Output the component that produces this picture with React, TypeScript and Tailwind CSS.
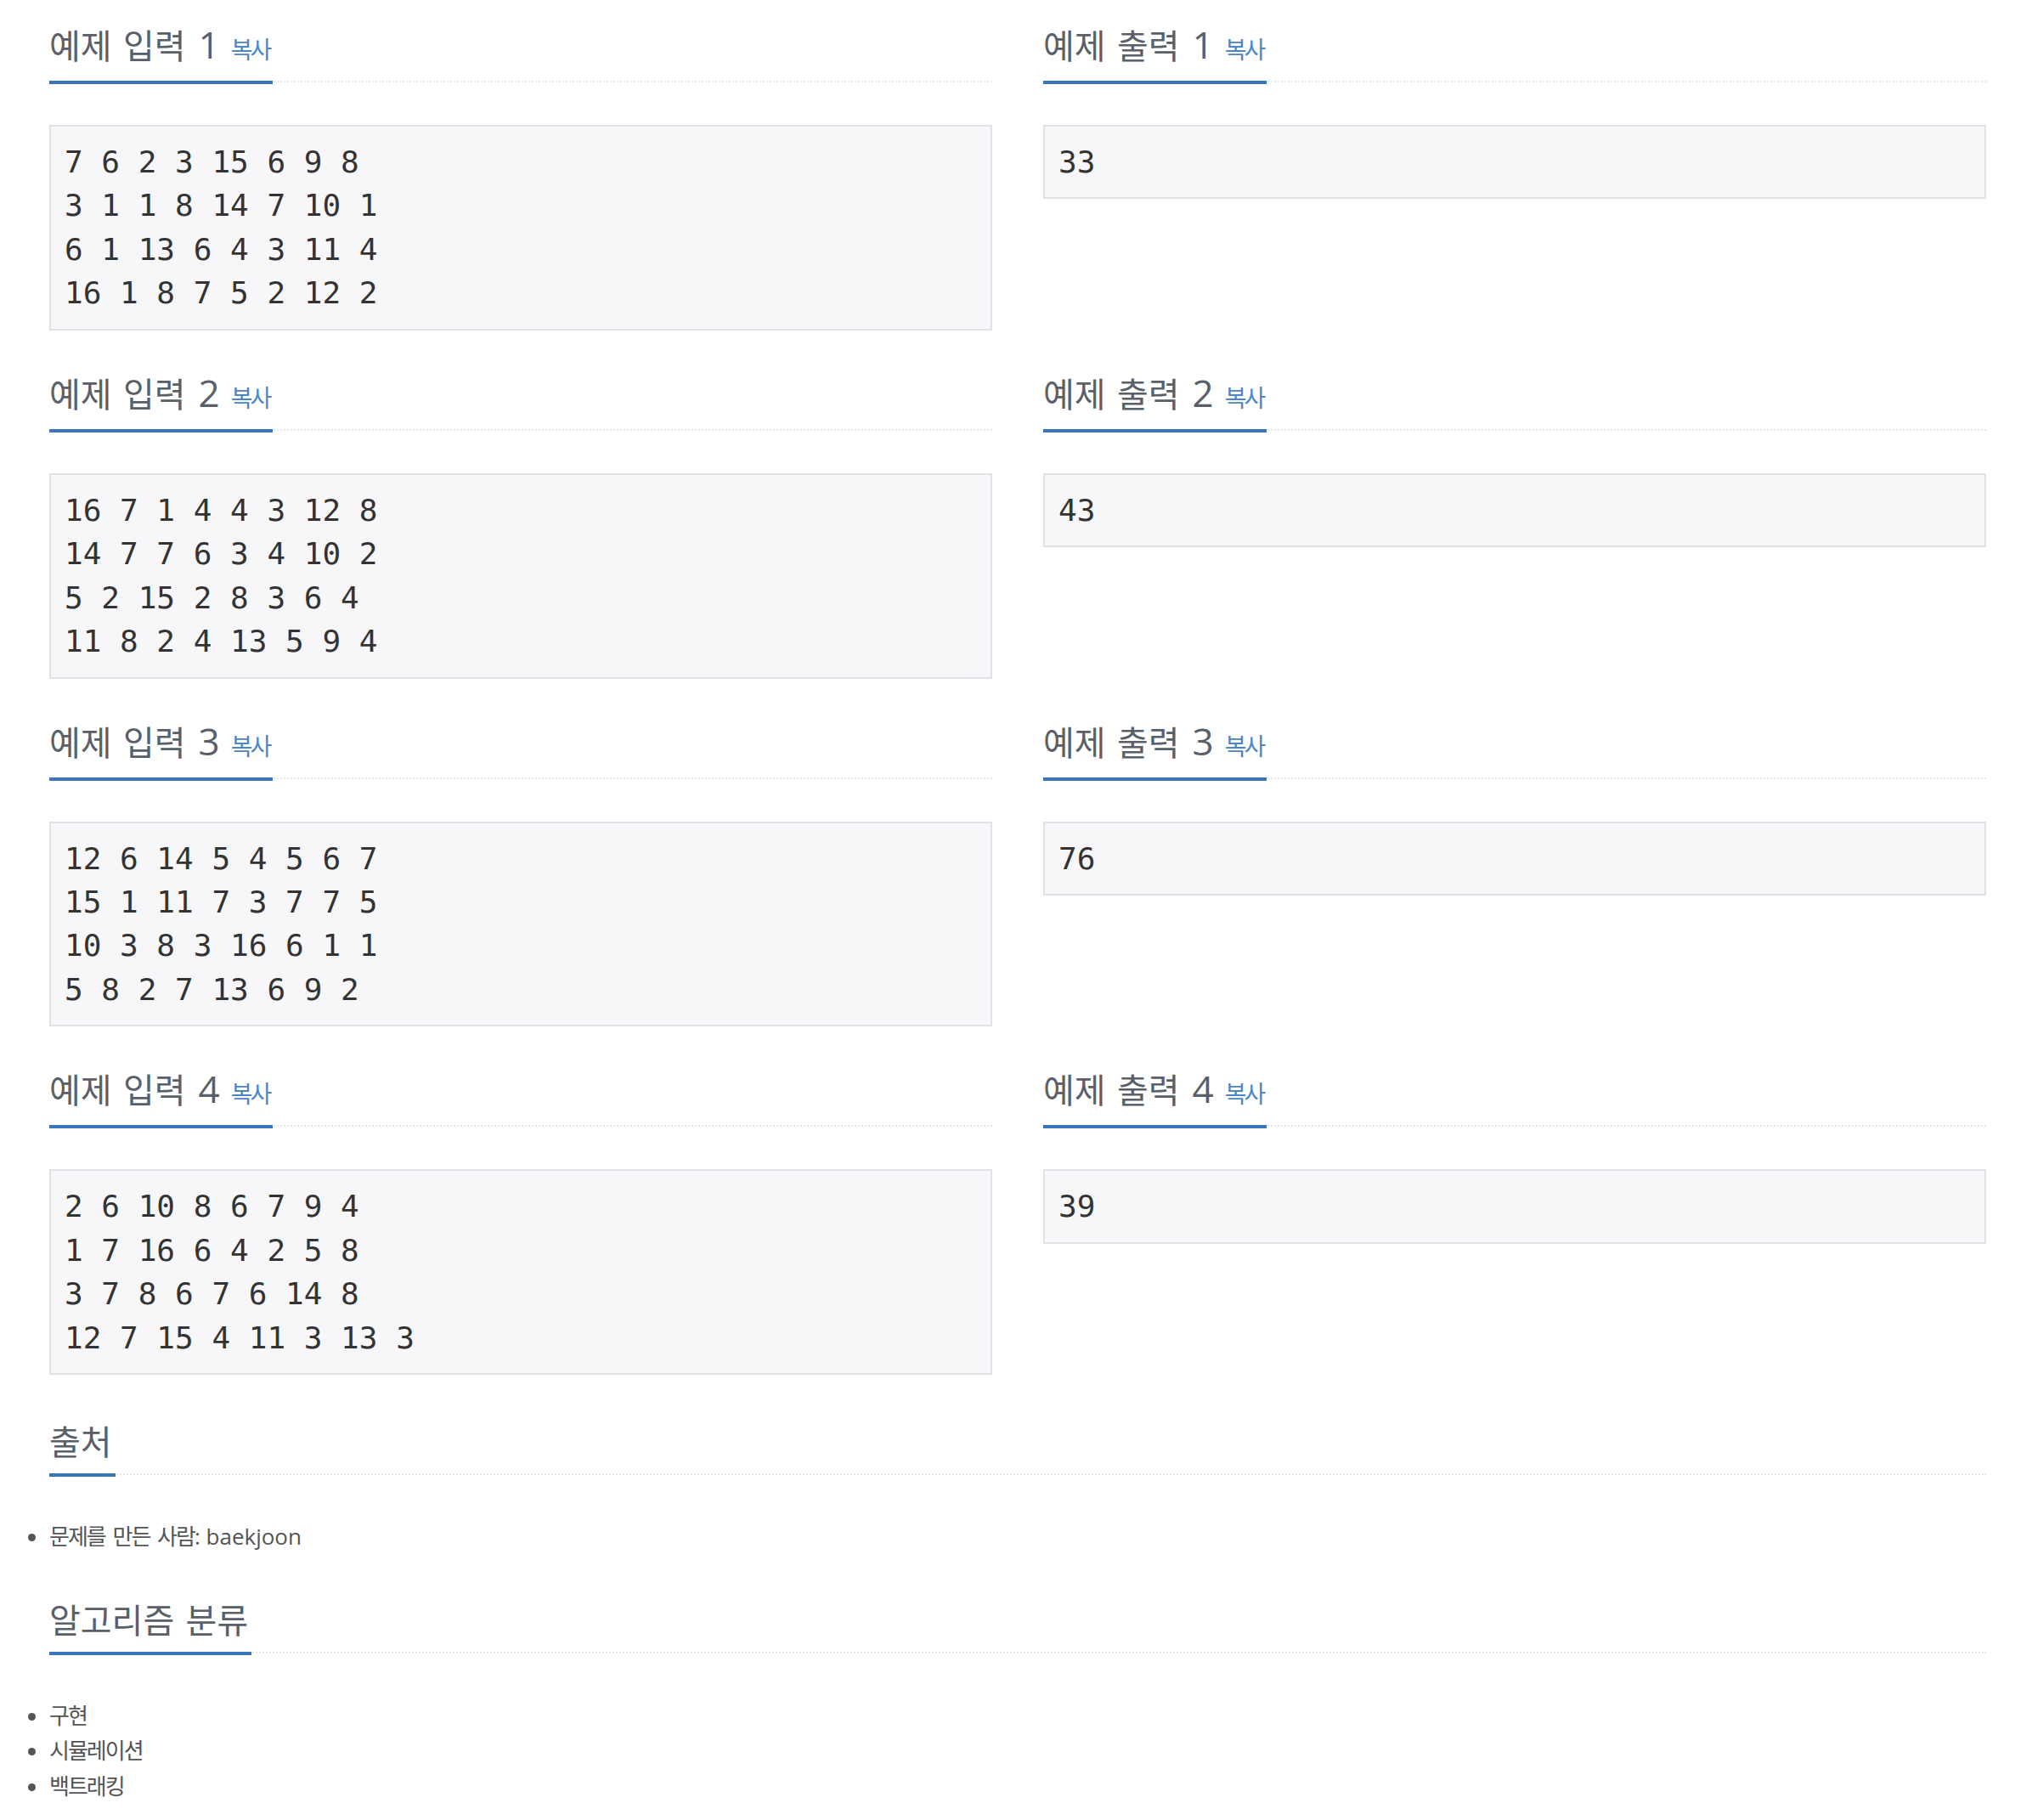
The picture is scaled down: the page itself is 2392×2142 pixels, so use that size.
const SAMPLES = [
  {
    input: "7 6 2 3 15 6 9 8\n3 1 1 8 14 7 10 1\n6 1 13 6 4 3 11 4\n16 1 8 7 5 2 12 2",
    output: "33",
  },
  {
    input: "16 7 1 4 4 3 12 8\n14 7 7 6 3 4 10 2\n5 2 15 2 8 3 6 4\n11 8 2 4 13 5 9 4",
    output: "43",
  },
  {
    input: "12 6 14 5 4 5 6 7\n15 1 11 7 3 7 7 5\n10 3 8 3 16 6 1 1\n5 8 2 7 13 6 9 2",
    output: "76",
  },
  {
    input: "2 6 10 8 6 7 9 4\n1 7 16 6 4 2 5 8\n3 7 8 6 7 6 14 8\n12 7 15 4 11 3 13 3",
    output: "39",
  },
];

const ALGORITHMS = ["구현", "시뮬레이션", "백트래킹"];

function Headline({ title, num, copy }: { title: string; num?: number; copy?: boolean }) {
  return (
    <div className="flex border-b-2 border-dotted border-[#e4e9f0] pt-[28px]">
      <h2 className="-mb-1 border-b-4 border-[#3a75bb] pb-[13px] pr-1 text-[40px] leading-[48px] font-normal text-[#5a6069]">
        <span className="[word-spacing:3px]">{title}</span>
        {num !== undefined && <span className="ml-[15px] text-[44px]">{num}</span>}
        {copy && (
          <span className="ml-[13px] text-[28px] tracking-[-3px] text-[#4a86c8]">복사</span>
        )}
      </h2>
    </div>
  );
}

function Sample({ label, num, text }: { label: string; num: number; text: string }) {
  return (
    <section className="flex flex-col">
      <Headline title={label} num={num} copy />
      <pre className="mt-[50px] mb-[21px] border-2 border-[#e1e1e8] bg-[#f7f7f9] p-4 font-['DejaVu_Sans_Mono',monospace] text-[36px] leading-[51.43px] text-[#333]">
        {text}
      </pre>
    </section>
  );
}

export default function App() {
  return (
    <div className="min-h-screen bg-white pl-[58px] pr-[54px] pb-[19px] font-['Open_Sans','Noto_Sans_CJK_KR',sans-serif]">
      {/* ── Sample rows ── */}
      {SAMPLES.map((s, i) => (
        <div key={i} className="grid grid-cols-2 items-start gap-x-[60px]">
          <Sample label="예제 입력" num={i + 1} text={s.input} />
          <Sample label="예제 출력" num={i + 1} text={s.output} />
        </div>
      ))}

      {/* ── Source ── */}
      <section className="mt-[6px]">
        <Headline title="출처" />
        <ul className="mt-[52px] list-disc text-[26px] leading-[41.6px] text-[#555]">
          <li>
            <span className="tracking-[-2px] [word-spacing:4px]">문제를 만든 사람: </span>
            <span>baekjoon</span>
          </li>
        </ul>
      </section>

      {/* ── Tags ── */}
      <section className="mt-[25px]">
        <Headline title="알고리즘 분류" />
        <ul className="mt-[53px] list-disc text-[26px] leading-[41.6px] text-[#555]">
          {ALGORITHMS.map((a) => (
            <li key={a}>
              <span className="tracking-[-2px]">{a}</span>
            </li>
          ))}
        </ul>
      </section>
    </div>
  );
}
